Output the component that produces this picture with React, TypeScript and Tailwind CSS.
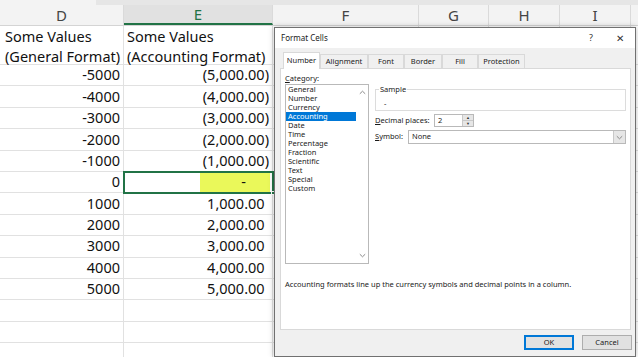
import { ReactNode } from 'react'

const cols = [
  { label: 'D', w: 'w-[124px]' },
  { label: 'E', w: 'w-[149px]', sel: true },
  { label: 'F', w: 'w-[146px]' },
  { label: 'G', w: 'w-[70px]' },
  { label: 'H', w: 'w-[71px]' },
  { label: 'I', w: 'w-[71px]' },
]

const values: (number | null)[] = [-5000, -4000, -3000, -2000, -1000, 0, 1000, 2000, 3000, 4000, 5000, null, null, null]

const categories = [
  'General', 'Number', 'Currency', 'Accounting', 'Date', 'Time',
  'Percentage', 'Fraction', 'Scientific', 'Text', 'Special', 'Custom',
]

const tabs = [
  { label: 'Number', w: 'w-[37px]', active: true },
  { label: 'Alignment', w: 'w-[48px]' },
  { label: 'Font', w: 'w-[36px]' },
  { label: 'Border', w: 'w-[38px]' },
  { label: 'Fill', w: 'w-[36px]' },
  { label: 'Protection', w: 'w-[47px]' },
]

const fmt = (v: number) => v.toLocaleString('en-US', { minimumFractionDigits: 2, maximumFractionDigits: 2 })

function Chevron({ up = false }: { up?: boolean }) {
  return (
    <svg width="7" height="5" viewBox="0 0 7 5" className={up ? 'rotate-180' : ''}>
      <path d="M0.8 1.2 L3.5 3.8 L6.2 1.2" fill="none" stroke="#8a8a8a" strokeWidth="1" />
    </svg>
  )
}

function Underlined({ first, rest }: { first: string; rest: string }) {
  return (
    <span>
      <span className="underline underline-offset-1">{first}</span>
      {rest}
    </span>
  )
}

function Sheet() {
  return (
    <div className="flex flex-col">
      <div className="flex h-[5px] bg-[#e6e6e6]">
        <div className="w-[96px] bg-[#f3f3f3]" />
      </div>

      {/* column headers */}
      <div className="flex h-[21px] border-b border-[#d4d4d4] bg-[#f3f3f3] text-[15px] text-[#444]">
        {cols.map(c => (
          <div
            key={c.label}
            className={`${c.w} flex shrink-0 items-center justify-center border-r border-[#dadada] ${
              c.sel ? 'border-b-2 border-b-[#217346] bg-[#e1e1e1] text-[#217346]' : ''
            }`}
          >
            {c.label}
          </div>
        ))}
        <div className="flex-1" />
      </div>

      {/* title row, wrapped text */}
      <div className="flex h-[39px] border-b border-[#e1e1e1] text-[14.5px] leading-[20px] text-[#111]">
        <div className="w-[124px] shrink-0 border-r border-[#e1e1e1] pl-[5px]">
          Some Values
          <br />
          (General Format)
        </div>
        <div className="w-[149px] shrink-0 border-r border-[#e1e1e1] pl-[3px]">
          Some Values
          <br />
          (Accounting Format)
        </div>
        <Blanks />
      </div>

      {values.map((v, i) => (
        <div key={i} className="flex h-[21.4px] shrink-0 border-b border-[#e1e1e1] text-[14.5px] text-[#111]">
          <div className="flex w-[124px] shrink-0 items-center justify-end border-r border-[#e1e1e1] pr-[3px]">
            {v}
          </div>
          <div className="flex w-[149px] shrink-0 items-center justify-end border-r border-[#e1e1e1] pr-[3px]">
            {v === null ? null : v < 0 ? (
              `(${fmt(-v)})`
            ) : v === 0 ? (
              <div className="mr-[-1px] flex h-[19px] w-[70px] items-center justify-end bg-[#eaf85a] pr-[24px]">-</div>
            ) : (
              <span>
                {fmt(v)}
                <span className="invisible">)</span>
              </span>
            )}
          </div>
          <Blanks />
        </div>
      ))}
    </div>
  )
}

function Blanks() {
  return (
    <>
      <div className="w-[146px] shrink-0 border-r border-[#e1e1e1]" />
      <div className="w-[70px] shrink-0 border-r border-[#e1e1e1]" />
      <div className="w-[71px] shrink-0 border-r border-[#e1e1e1]" />
      <div className="w-[71px] shrink-0 border-r border-[#e1e1e1]" />
      <div className="flex-1" />
    </>
  )
}

function Box({ className, children }: { className: string; children?: ReactNode }) {
  return <div className={`border border-[#b9b9b9] bg-white ${className}`}>{children}</div>
}

function FormatCellsDialog() {
  return (
    <div className="absolute left-[274px] top-[27px] flex h-[330px] w-[362px] flex-col border border-[#707070] bg-[#f0f0f0] text-[7.5px] text-[#1a1a1a] shadow-[0_0_6px_rgba(0,0,0,0.25)]">
      {/* title bar */}
      <div className="flex h-[20px] shrink-0 items-center bg-white pl-[6px] text-[8px]">
        <span>Format Cells</span>
        <div className="ml-auto flex gap-[19px] pr-[10px] text-[10px] text-[#333]">
          <span className="w-[10px] text-center text-[9px]">?</span>
          <span className="w-[10px] text-center">✕</span>
        </div>
      </div>

      {/* tabs */}
      <div className="mt-[4px] flex h-[16px] items-end pl-[8px]">
        {tabs.map(t => (
          <div
            key={t.label}
            className={`${t.w} flex shrink-0 items-center justify-center border border-b-0 border-[#d9d9d9] ${
              t.active ? 'relative z-10 -mb-px h-[17px] bg-white' : 'h-[14px] bg-[#f0f0f0]'
            }`}
          >
            {t.label}
          </div>
        ))}
      </div>

      {/* panel */}
      <div className="ml-[5px] flex h-[262px] w-[351px] flex-col border border-[#d9d9d9] bg-white px-[4px] pt-[3px]">
        <div className="flex">
          <div className="flex w-[84px] shrink-0 flex-col">
            <div className="h-[12px] leading-[12px]">
              <Underlined first="C" rest="ategory:" />
            </div>
            <Box className="flex h-[180px]">
              <div className="flex flex-1 flex-col">
                {categories.map(c => (
                  <div
                    key={c}
                    className={`h-[9px] pl-[2px] leading-[9px] ${c === 'Accounting' ? 'bg-[#0078d7] text-white' : ''}`}
                  >
                    {c}
                  </div>
                ))}
              </div>
              <div className="flex w-[12px] flex-col items-center justify-between py-[5px]">
                <Chevron up />
                <Chevron />
              </div>
            </Box>
          </div>

          <div className="ml-[6px] flex w-[251px] flex-col">
            <div className="mt-[17px] h-[22px] border border-[#dcdcdc]">
              <div className="ml-[3px] mt-[-6px] w-fit bg-white px-[1px] leading-[10px]">Sample</div>
              <div className="ml-[8px] mt-[4px] leading-[10px]">-</div>
            </div>

            <div className="mt-[3px] flex h-[13px] items-center">
              <div className="w-[59px] shrink-0">
                <Underlined first="D" rest="ecimal places:" />
              </div>
              <Box className="flex h-[13px] w-[40px] items-stretch">
                <div className="flex flex-1 items-center pl-[3px]">2</div>
                <div className="flex w-[11px] flex-col border-l border-[#c8c8c8] bg-[#e6e6e6]">
                  <div className="flex flex-1 items-center justify-center border-b border-[#c8c8c8] text-[4px] leading-none text-[#333]">▲</div>
                  <div className="flex flex-1 items-center justify-center text-[4px] leading-none text-[#333]">▼</div>
                </div>
              </Box>
            </div>

            <div className="mt-[3px] flex h-[14px] items-center">
              <div className="w-[33px] shrink-0">
                <Underlined first="S" rest="ymbol:" />
              </div>
              <Box className="flex h-[14px] w-[218px] items-stretch">
                <div className="flex flex-1 items-center pl-[3px]">None</div>
                <div className="flex w-[12px] items-center justify-center border-l border-[#c8c8c8] bg-[#e6e6e6]">
                  <Chevron />
                </div>
              </Box>
            </div>
          </div>
        </div>

        <div className="mt-[15px] leading-[10px]">
          Accounting formats line up the currency symbols and decimal points in a column.
        </div>
      </div>

      {/* buttons */}
      <div className="mt-[5px] flex justify-end gap-[8px] pr-[3px]">
        <button className="flex h-[15px] w-[50px] items-center justify-center border-2 border-[#0078d7] bg-[#e1e1e1]">
          OK
        </button>
        <button className="flex h-[15px] w-[50px] items-center justify-center border border-[#adadad] bg-[#e1e1e1]">
          Cancel
        </button>
      </div>
    </div>
  )
}

export default function App() {
  return (
    <div className="relative h-[357px] w-[638px] overflow-hidden bg-white font-['Noto_Sans',sans-serif]">
      <Sheet />
      {/* active cell outline */}
      <div className="absolute left-[123px] top-[171px] h-[23px] w-[151px] border-2 border-[#217346]">
        <div className="absolute -bottom-[3px] -right-[3px] h-[4px] w-[4px] border border-white bg-[#217346]" />
      </div>
      <FormatCellsDialog />
    </div>
  )
}
